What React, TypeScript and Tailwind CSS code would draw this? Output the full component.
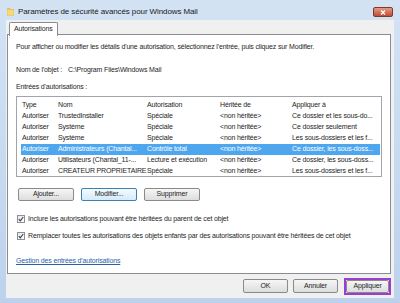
import React from 'react';

// Entries of the permissions list
const ENTRIES = [
  { type: 'Autoriser', nom: 'TrustedInstaller', auth: 'Spéciale', from: '<non héritée>', apply: 'Ce dossier et les sous-do...' },
  { type: 'Autoriser', nom: 'Système', auth: 'Spéciale', from: '<non héritée>', apply: 'Ce dossier seulement' },
  { type: 'Autoriser', nom: 'Système', auth: 'Spéciale', from: '<non héritée>', apply: 'Les sous-dossiers et les f...' },
  { type: 'Autoriser', nom: 'Administrateurs (Chantal...', auth: 'Contrôle total', from: '<non héritée>', apply: 'Ce dossier, les sous-doss...', selected: true },
  { type: 'Autoriser', nom: 'Utilisateurs (Chantal_11-...', auth: 'Lecture et exécution', from: '<non héritée>', apply: 'Ce dossier, les sous-doss...' },
  { type: 'Autoriser', nom: 'CREATEUR PROPRIETAIRE', auth: 'Spéciale', from: '<non héritée>', apply: 'Les sous-dossiers et les f...' },
];

const COLS = 'grid grid-cols-[36px_89px_73px_72px_88px]';

const Button: React.FC<{ label: string; focused?: boolean; className?: string }> = ({ label, focused, className }) => (
  <div
    className={`flex items-center justify-center rounded-[2px] border text-[7px] text-[#1e1e1e] ${
      focused
        ? 'border-[#3c7fb1] bg-gradient-to-b from-[#f4fafe] to-[#d4ebfa]'
        : 'border-[#8a8a8a] bg-gradient-to-b from-[#f6f6f6] to-[#dddddd]'
    } ${className ?? ''}`}
  >
    {label}
  </div>
);

const Checkbox: React.FC<{ label: string }> = ({ label }) => (
  <div className="flex items-center gap-[3px] h-[10px]">
    <div className="w-[8px] h-[8px] border border-[#8f8f8f] bg-gradient-to-br from-[#e6e6e6] to-white flex items-center justify-center">
      <svg width="6" height="6" viewBox="0 0 6 6">
        <path d="M0.8 3.2 L2.3 4.8 L5.2 1" stroke="#2a3b5c" strokeWidth="1.1" fill="none" />
      </svg>
    </div>
    <span>{label}</span>
  </div>
);

export default function App() {
  return (
    <div className="w-[400px] h-[303px] flex flex-col bg-gradient-to-b from-[#d3e3f4] to-[#bcd2ec] font-['Liberation_Sans',sans-serif] text-[#1e1e1e] overflow-hidden">
      {/* Title bar */}
      <div className="h-[20px] flex items-center pl-[7px] pr-[7px] shrink-0">
        <svg width="7" height="9" viewBox="0 0 7 9" className="mt-[3px]">
          <path d="M0 1 L3 1 L4 2 L7 2 L7 9 L0 9 Z" fill="#e8c25a" />
          <path d="M0.5 3 L6.5 3 L6.5 8.5 L0.5 8.5 Z" fill="#f5d97c" />
        </svg>
        <span className="ml-[4px] mt-[4px] text-[8px] tracking-[-0.1px] text-[#1a1a1a]">
          Paramètres de sécurité avancés pour Windows Mail
        </span>
        <div className="ml-auto mt-[4px] w-[20px] h-[10px] rounded-[2px] border border-[#7a3a30] bg-gradient-to-b from-[#e49a86] to-[#c04a32] flex items-center justify-center">
          <svg width="6" height="5" viewBox="0 0 6 5">
            <path d="M1 0.5 L5 4.5 M5 0.5 L1 4.5" stroke="white" strokeWidth="1.3" />
          </svg>
        </div>
      </div>

      {/* Window body */}
      <div className="flex-1 flex pl-[6px] pr-[8px] pb-[5px]">
        <div className="flex-1 flex flex-col bg-[#f0f0f0] pl-[1px] pr-[3px] text-[7px] tracking-[-0.15px]">
          {/* Tab header */}
          <div className="flex pl-[2px] pt-[2px] h-[15px]">
            <div className="relative z-10 h-[14px] px-[4px] bg-white border border-b-0 border-[#898c95] rounded-t-[2px] flex items-center">
              Autorisations
            </div>
          </div>

          {/* Tab panel */}
          <div className="h-[240px] -mt-[1px] bg-white border border-[#898c95] pl-[8px] pr-[8px] flex flex-col">
            <div className="mt-[7px] h-[10px] leading-[10px] whitespace-nowrap">
              Pour afficher ou modifier les détails d'une autorisation, sélectionnez l'entrée, puis cliquez sur Modifier.
            </div>
            <div className="mt-[13px] h-[10px] leading-[10px] flex whitespace-nowrap">
              <span className="w-[52px]">Nom de l'objet :</span>
              <span>C:\Program Files\Windows Mail</span>
            </div>
            <div className="mt-[7px] h-[10px] leading-[10px]">Entrées d'autorisations :</div>

            {/* List view */}
            <div className="mt-[4px] h-[81px] border border-[#a0a4ab] pl-[4px] pr-[1px]">
              <div className={`${COLS} h-[14px] items-center pt-[2px] pl-[1px]`}>
                <span>Type</span>
                <span>Nom</span>
                <span>Autorisation</span>
                <span>Héritée de</span>
                <span>Appliquer à</span>
              </div>
              {ENTRIES.map((e, i) => (
                <div
                  key={i}
                  className={`${COLS} h-[11px] items-center pl-[1px] whitespace-nowrap overflow-hidden ${
                    e.selected ? 'bg-[#4ea6ee] text-white' : ''
                  }`}
                >
                  <span>{e.type}</span>
                  <span>{e.nom}</span>
                  <span>{e.auth}</span>
                  <span>{e.from}</span>
                  <span>{e.apply}</span>
                </div>
              ))}
            </div>

            {/* Action buttons */}
            <div className="mt-[11px] flex gap-[7px] pl-[2px]">
              <Button label="Ajouter..." className="w-[56px] h-[13px]" />
              <Button label="Modifier..." focused className="w-[56px] h-[13px]" />
              <Button label="Supprimer" className="w-[56px] h-[13px]" />
            </div>

            <div className="mt-[13px] pl-[1px]">
              <Checkbox label="Inclure les autorisations pouvant être héritées du parent de cet objet" />
            </div>
            <div className="mt-[7px] pl-[1px]">
              <Checkbox label="Remplacer toutes les autorisations des objets enfants par des autorisations pouvant être héritées de cet objet" />
            </div>

            <div className="mt-[15px] h-[10px] leading-[10px] text-[#2a62a8] underline">
              Gestion des entrées d'autorisations
            </div>
          </div>

          {/* Dialog buttons */}
          <div className="flex justify-end items-start gap-[5px] mt-[4px] pr-[0px]">
            <Button label="OK" className="w-[45px] h-[14px] mt-[1px]" />
            <Button label="Annuler" className="w-[45px] h-[14px] mt-[1px]" />
            <div className="ml-[1px] w-[47px] h-[17px] border-2 border-[#9a3dd0] flex">
              <Button label="Appliquer" className="flex-1" />
            </div>
          </div>
        </div>
      </div>
    </div>
  );
}
